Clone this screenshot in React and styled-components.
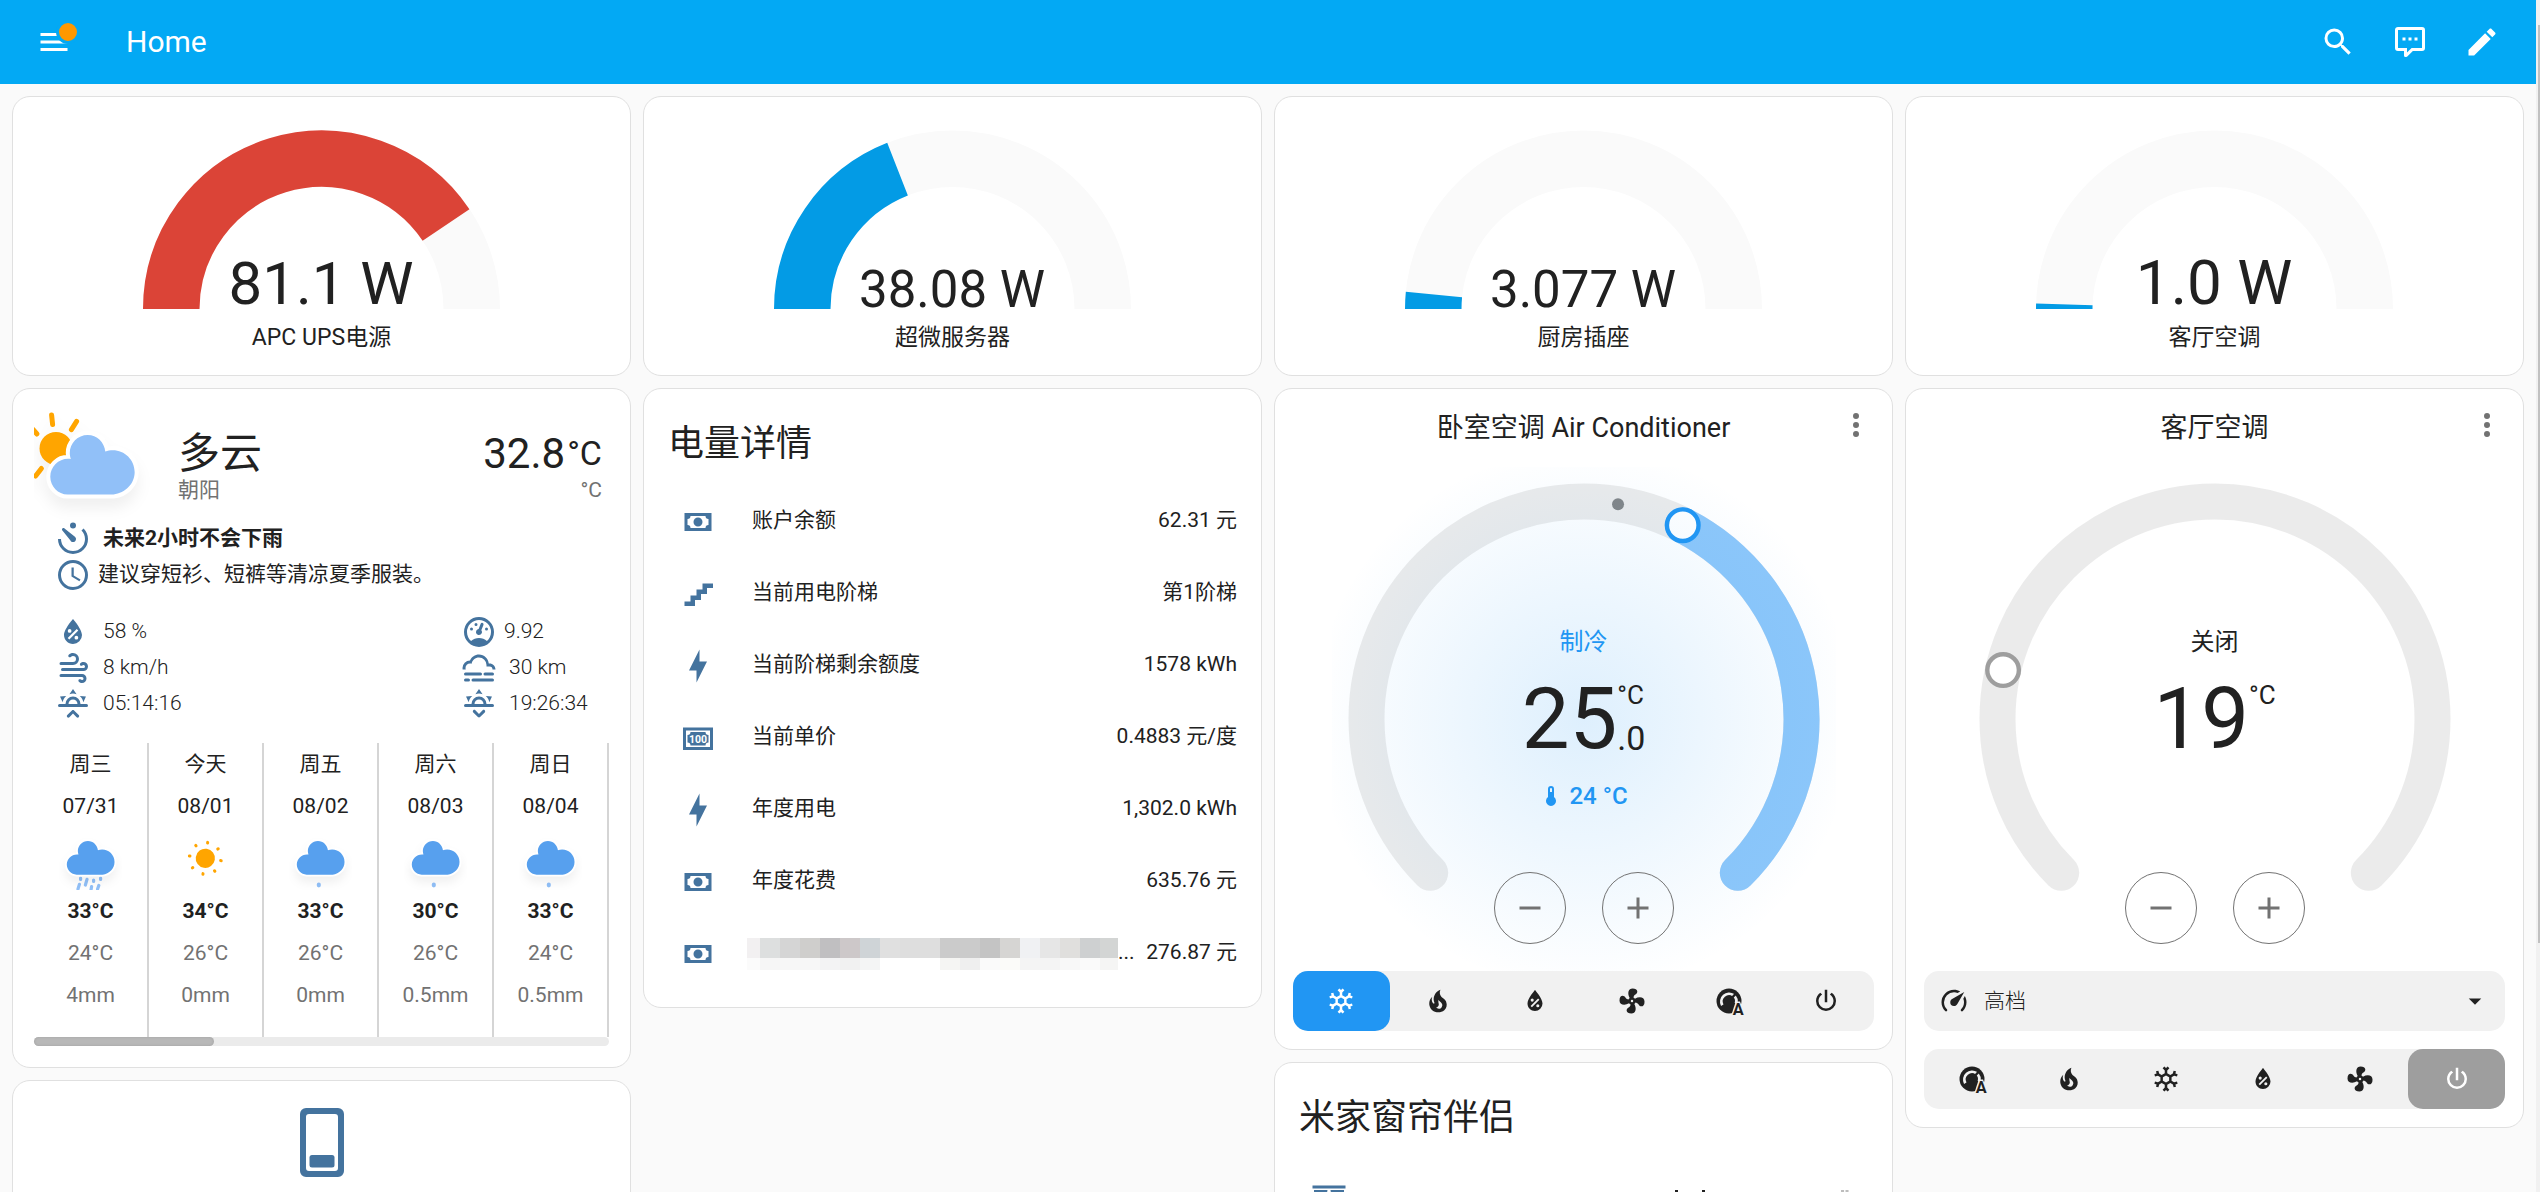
import React from 'react';
import styled, { createGlobalStyle } from 'styled-components';

const colors = {
    primary: '#03a9f4',
    text: '#212121',
    secondary: '#727272',
    icon: '#44739e',
    border: '#e0e0e0',
    page: '#fafafa',
    control: '#f1f1f1',
    cool: '#2196f3',
    off: '#9e9e9e',
    cloud: '#57a0ee',
    lightCloud: '#91c0f8',
    sun: '#ffa500',
};

const icons = {
    menu: 'M3,6H21V8H3V6M3,11H21V13H3V11M3,16H21V18H3V16Z',
    magnify: 'M9.5,3A6.5,6.5 0 0,1 16,9.5C16,11.11 15.41,12.59 14.44,13.73L14.71,14H15.5L20.5,19L19,20.5L14,15.5V14.71L13.73,14.44C12.59,15.41 11.11,16 9.5,16A6.5,6.5 0 0,1 3,9.5A6.5,6.5 0 0,1 9.5,3M9.5,5C7,5 5,7 5,9.5C5,12 7,14 9.5,14C12,14 14,12 14,9.5C14,7 12,5 9.5,5Z',
    comment: 'M9,22A1,1 0 0,1 8,21V18H4A2,2 0 0,1 2,16V4C2,2.89 2.9,2 4,2H20A2,2 0 0,1 22,4V16A2,2 0 0,1 20,18H13.9L10.2,21.71C10,21.9 9.75,22 9.5,22V22H9M10,16V19.08L13.08,16H20V4H4V16H10M17,11H15V9H17V11M13,11H11V9H13V11M9,11H7V9H9V11Z',
    pencil: 'M20.71,7.04C21.1,6.65 21.1,6 20.71,5.63L18.37,3.29C18,2.9 17.35,2.9 16.96,3.29L15.12,5.12L18.87,8.87M3,17.25V21H6.75L17.81,9.93L14.06,6.18L3,17.25Z',
    dots: 'M12,16A2,2 0 0,1 14,18A2,2 0 0,1 12,20A2,2 0 0,1 10,18A2,2 0 0,1 12,16M12,10A2,2 0 0,1 14,12A2,2 0 0,1 12,14A2,2 0 0,1 10,12A2,2 0 0,1 12,10M12,4A2,2 0 0,1 14,6A2,2 0 0,1 12,8A2,2 0 0,1 10,6A2,2 0 0,1 12,4Z',
    cash: 'M3,6H21V18H3V6M12,9A3,3 0 0,1 15,12A3,3 0 0,1 12,15A3,3 0 0,1 9,12A3,3 0 0,1 12,9M7,8A2,2 0 0,1 5,10V14A2,2 0 0,1 7,16H17A2,2 0 0,1 19,14V10A2,2 0 0,1 17,8H7Z',
    stairs: 'M15,5V9H11V13H7V17H3V20H10V16H14V12H18V8H22V5H15Z',
    bolt: 'M11 15H6L13 1V9H18L11 23V15Z',
    snowflake: 'M20.79,13.95L18.46,14.57L16.46,13.44V10.56L18.46,9.43L20.79,10.05L21.31,8.12L19.54,7.65L20,5.88L18.07,5.36L17.45,7.69L15.45,8.82L13,7.38V5.12L14.71,3.41L13.29,2L12,3.29L10.71,2L9.29,3.41L11,5.12V7.38L8.5,8.82L6.5,7.69L5.92,5.36L4,5.88L4.47,7.65L2.7,8.12L3.22,10.05L5.55,9.43L7.55,10.56V13.45L5.55,14.58L3.22,13.96L2.7,15.89L4.47,16.36L4,18.12L5.93,18.64L6.55,16.31L8.55,15.18L11,16.62V18.88L9.29,20.59L10.71,22L12,20.71L13.29,22L14.7,20.59L13,18.88V16.62L15.5,15.17L17.5,16.3L18.12,18.63L20,18.12L19.53,16.35L21.3,15.88L20.79,13.95M9.5,10.56L12,9.11L14.5,10.56V13.44L12,14.89L9.5,13.44V10.56Z',
    fire: 'M17.66 11.2C17.43 10.9 17.15 10.64 16.89 10.38C16.22 9.78 15.46 9.35 14.82 8.72C13.33 7.26 13 4.85 13.95 3C13 3.23 12.17 3.75 11.46 4.32C8.87 6.4 7.85 10.07 9.07 13.22C9.11 13.32 9.15 13.42 9.15 13.55C9.15 13.77 9 13.97 8.8 14.05C8.57 14.15 8.33 14.09 8.14 13.93C8.08 13.88 8.04 13.83 8 13.76C6.87 12.33 6.69 10.28 7.45 8.64C5.78 10 4.87 12.3 5 14.47C5.06 14.97 5.12 15.47 5.29 15.97C5.43 16.57 5.7 17.17 6 17.7C7.08 19.43 8.95 20.67 10.96 20.92C13.1 21.19 15.39 20.8 17.03 19.32C18.86 17.66 19.5 15 18.56 12.72L18.43 12.46C18.22 12 17.66 11.2 17.66 11.2M14.5 17.5C14.22 17.74 13.76 18 13.4 18.1C12.28 18.5 11.16 17.94 10.5 17.28C11.69 17 12.4 16.12 12.61 15.23C12.78 14.43 12.46 13.77 12.33 13C12.21 12.26 12.23 11.63 12.5 10.94C12.69 11.32 12.89 11.7 13.13 12C13.9 13 15.11 13.44 15.37 14.8C15.41 14.94 15.43 15.08 15.43 15.23C15.46 16.05 15.1 16.95 14.5 17.5H14.5Z',
    humidity: 'M12,3.25C12,3.25 6,10 6,14C6,17.32 8.69,20 12,20A6,6 0 0,0 18,14C18,10 12,3.25 12,3.25M14.47,9.97L15.53,11.03L9.53,17.03L8.47,15.97M9.75,10A1.25,1.25 0 0,1 11,11.25A1.25,1.25 0 0,1 9.75,12.5A1.25,1.25 0 0,1 8.5,11.25A1.25,1.25 0 0,1 9.75,10M14.25,14.5A1.25,1.25 0 0,1 15.5,15.75A1.25,1.25 0 0,1 14.25,17A1.25,1.25 0 0,1 13,15.75A1.25,1.25 0 0,1 14.25,14.5Z',
    fan: 'M12,11A1,1 0 0,0 11,12A1,1 0 0,0 12,13A1,1 0 0,0 13,12A1,1 0 0,0 12,11M12.5,2C17,2 17.11,5.57 14.75,6.75C13.76,7.24 13.32,8.29 13.13,9.22C13.61,9.42 14.03,9.73 14.35,10.13C18.05,8.13 22.03,8.92 22.03,12.5C22.03,17 18.46,17.1 17.28,14.73C16.78,13.74 15.72,13.3 14.79,13.11C14.59,13.59 14.28,14 13.88,14.34C15.87,18.03 15.08,22 11.5,22C7,22 6.91,18.42 9.27,17.24C10.25,16.75 10.69,15.71 10.89,14.79C10.4,14.59 9.97,14.27 9.65,13.87C5.96,15.85 2,15.07 2,11.5C2,7 5.56,6.89 6.74,9.26C7.24,10.25 8.29,10.68 9.22,10.87C9.41,10.39 9.73,9.97 10.14,9.65C8.15,5.96 8.94,2 12.5,2Z',
    power: 'M16.56,5.44L15.11,6.89C16.84,7.94 18,9.83 18,12A6,6 0 0,1 12,18A6,6 0 0,1 6,12C6,9.83 7.16,7.94 8.88,6.88L7.44,5.44C5.36,6.88 4,9.28 4,12A8,8 0 0,0 12,20A8,8 0 0,0 20,12C20,9.28 18.64,6.88 16.56,5.44M13,3H11V13H13',
    timer: 'M4.94,6.35C4.55,5.96 4.55,5.32 4.94,4.93C5.33,4.54 5.96,4.54 6.35,4.93L13.07,10.31L13.42,10.59C14.2,11.37 14.2,12.64 13.42,13.42C12.64,14.2 11.37,14.2 10.59,13.42L10.31,13.07L4.94,6.35M12,20A8,8 0 0,0 20,12C20,9.79 19.1,7.79 17.66,6.34L19.07,4.93C20.88,6.74 22,9.24 22,12A10,10 0 0,1 12,22A10,10 0 0,1 2,12H4A8,8 0 0,0 12,20M12,1A2,2 0 0,1 14,3A2,2 0 0,1 12,5A2,2 0 0,1 10,3A2,2 0 0,1 12,1Z',
    clock: 'M12,20A8,8 0 0,0 20,12A8,8 0 0,0 12,4A8,8 0 0,0 4,12A8,8 0 0,0 12,20M12,2A10,10 0 0,1 22,12A10,10 0 0,1 12,22C6.47,22 2,17.5 2,12A10,10 0 0,1 12,2M12.5,7V12.25L17,14.92L16.25,16.15L11,13V7H12.5Z',
    wind: 'M4,10A1,1 0 0,1 3,9A1,1 0 0,1 4,8H12A2,2 0 0,0 14,6A2,2 0 0,0 12,4C11.45,4 10.95,4.22 10.59,4.59C10.2,5 9.56,5 9.17,4.59C8.78,4.2 8.78,3.56 9.17,3.17C9.9,2.45 10.9,2 12,2A4,4 0 0,1 16,6A4,4 0 0,1 12,10H4M19,12A1,1 0 0,0 20,11A1,1 0 0,0 19,10C18.72,10 18.47,10.11 18.29,10.29C17.9,10.68 17.27,10.68 16.88,10.29C16.5,9.9 16.5,9.27 16.88,8.88C17.42,8.34 18.17,8 19,8A3,3 0 0,1 22,11A3,3 0 0,1 19,14H5A1,1 0 0,1 4,13A1,1 0 0,1 5,12H19M18,18H4A1,1 0 0,1 3,17A1,1 0 0,1 4,16H18A3,3 0 0,1 21,19A3,3 0 0,1 18,22C17.17,22 16.42,21.66 15.88,21.12C15.5,20.73 15.5,20.1 15.88,19.71C16.27,19.32 16.9,19.32 17.29,19.71C17.47,19.89 17.72,20 18,20A1,1 0 0,0 19,19A1,1 0 0,0 18,18Z',
    gauge: 'M12,2A10,10 0 0,0 2,12A10,10 0 0,0 12,22A10,10 0 0,0 22,12A10,10 0 0,0 12,2M12,4A8,8 0 0,1 20,12C20,14.4 19,16.5 17.3,18C15.9,16.7 14,16 12,16C10,16 8.2,16.7 6.7,18C5,16.5 4,14.4 4,12A8,8 0 0,1 12,4M14,5.89C13.62,5.9 13.26,6.15 13.1,6.54L11.81,9.77L11.71,10C11,10.13 10.41,10.6 10.14,11.26C9.73,12.29 10.23,13.45 11.26,13.86C12.29,14.27 13.45,13.77 13.86,12.74C14.12,12.08 14,11.32 13.57,10.76L13.67,10.5L14.96,7.29L14.97,7.26C15.17,6.75 14.92,6.17 14.41,5.96C14.28,5.91 14.15,5.89 14,5.89M10,6A1,1 0 0,0 9,7A1,1 0 0,0 10,8A1,1 0 0,0 11,7A1,1 0 0,0 10,6M7,9A1,1 0 0,0 6,10A1,1 0 0,0 7,11A1,1 0 0,0 8,10A1,1 0 0,0 7,9M17,9A1,1 0 0,0 16,10A1,1 0 0,0 17,11A1,1 0 0,0 18,10A1,1 0 0,0 17,9Z',
    fog: 'M3,15H13A1,1 0 0,1 14,16A1,1 0 0,1 13,17H3A1,1 0 0,1 2,16A1,1 0 0,1 3,15M16,15H21A1,1 0 0,1 22,16A1,1 0 0,1 21,17H16A1,1 0 0,1 15,16A1,1 0 0,1 16,15M1,12A5,5 0 0,1 6,7C7,4.65 9.3,3 12,3C15.43,3 18.24,5.66 18.5,9.03L19,9C21.19,9 22.97,10.76 23,13H21A2,2 0 0,0 19,11H17V10A5,5 0 0,0 12,5C9.5,5 7.45,6.82 7.06,9.19C6.73,9.07 6.37,9 6,9A3,3 0 0,0 3,12C3,12.35 3.06,12.69 3.17,13H1.1L1,12M3,19H5A1,1 0 0,1 6,20A1,1 0 0,1 5,21H3A1,1 0 0,1 2,20A1,1 0 0,1 3,19M8,19H21A1,1 0 0,1 22,20A1,1 0 0,1 21,21H8A1,1 0 0,1 7,20A1,1 0 0,1 8,19Z',
    sunrise: 'M3,12H7A5,5 0 0,1 12,7A5,5 0 0,1 17,12H21A1,1 0 0,1 22,13A1,1 0 0,1 21,14H3A1,1 0 0,1 2,13A1,1 0 0,1 3,12M15,12A3,3 0 0,0 12,9A3,3 0 0,0 9,12H15M12,2L14.39,5.42C13.65,5.15 12.84,5 12,5C11.16,5 10.35,5.15 9.61,5.42L12,2M3.34,7L7.5,6.65C6.9,7.16 6.36,7.78 5.94,8.5C5.5,9.24 5.25,10 5.11,10.79L3.34,7M20.65,7L18.88,10.79C18.74,10 18.47,9.23 18.05,8.5C17.63,7.78 17.1,7.15 16.5,6.64L20.65,7M12.71,16.3L15.82,19.41C16.21,19.8 16.21,20.43 15.82,20.82C15.43,21.21 14.8,21.21 14.41,20.82L12,18.41L9.59,20.82C9.2,21.21 8.57,21.21 8.18,20.82C7.79,20.43 7.79,19.8 8.18,19.41L11.29,16.3C11.5,16.1 11.74,16 12,16C12.26,16 12.5,16.1 12.71,16.3Z',
    sunset: 'M3,12H7A5,5 0 0,1 12,7A5,5 0 0,1 17,12H21A1,1 0 0,1 22,13A1,1 0 0,1 21,14H3A1,1 0 0,1 2,13A1,1 0 0,1 3,12M15,12A3,3 0 0,0 12,9A3,3 0 0,0 9,12H15M12,2L14.39,5.42C13.65,5.15 12.84,5 12,5C11.16,5 10.35,5.15 9.61,5.42L12,2M3.34,7L7.5,6.65C6.9,7.16 6.36,7.78 5.94,8.5C5.5,9.24 5.25,10 5.11,10.79L3.34,7M20.65,7L18.88,10.79C18.74,10 18.47,9.23 18.05,8.5C17.63,7.78 17.1,7.15 16.5,6.64L20.65,7M12.71,20.71L15.82,17.6C16.21,17.21 16.21,16.57 15.82,16.18C15.43,15.79 14.8,15.79 14.41,16.18L12,18.59L9.59,16.18C9.2,15.79 8.57,15.79 8.18,16.18C7.79,16.57 7.79,17.21 8.18,17.6L11.29,20.71C11.5,20.9 11.74,21 12,21C12.26,21 12.5,20.9 12.71,20.71Z',
    thermometer: 'M15 13V5A3 3 0 0 0 9 5V13A5 5 0 1 0 15 13M12 4A1 1 0 0 1 13 5V8H11V5A1 1 0 0 1 12 4Z',
    plus: 'M19,13H13V19H11V13H5V11H11V5H13V11H19V13Z',
    minus: 'M19,13H5V11H19V13Z',
    speedometer: 'M12,16A3,3 0 0,1 9,13C9,11.88 9.61,10.9 10.5,10.39L20.21,4.77L14.68,14.35C14.18,15.33 13.17,16 12,16M12,3C13.81,3 15.5,3.5 16.97,4.32L14.87,5.53C14,5.19 13,5 12,5A8,8 0 0,0 4,13C4,15.21 4.89,17.21 6.34,18.65H6.35C6.74,19.04 6.74,19.67 6.35,20.06C5.96,20.45 5.32,20.45 4.93,20.07V20.07C3.12,18.26 2,15.76 2,13A10,10 0 0,1 12,3M22,13C22,15.76 20.88,18.26 19.07,20.07V20.07C18.68,20.45 18.05,20.45 17.66,20.06C17.27,19.67 17.27,19.04 17.66,18.65V18.65C19.11,17.2 20,15.21 20,13C20,12 19.81,11 19.46,10.1L20.67,8C21.5,9.5 22,11.18 22,13Z',
    menuDown: 'M7,10L12,15L17,10H7Z',
    curtains: 'M23 3H1V1H23V3M2 22H6C6 19 4 17 4 17C10 13 11 4 11 4H2V22M22 4H13C13 4 14 13 20 17C20 17 18 19 18 22H22V4Z',
    expand: 'M9,11H15V8L19,12L15,16V13H9V16L5,12L9,8V11M2,20V4H4V20H2M20,20V4H22V20H20Z',
    collapse: 'M13,20V4H15.03V20H13M10,20V4H12.03V20H10M5,8L9.03,12L5,16V13H2V11H5V8M20,16L16,12L20,8V11H23V13H20V16Z',
    stop: 'M18,18H6V6H18V18Z',
};

const gauges = [
    { label: 'APC UPS电源', value: 81.1, text: '81.1 W', size: 60, color: '#db4437' },
    { label: '超微服务器', value: 38.08, text: '38.08 W', size: 51, color: '#039be5' },
    { label: '厨房插座', value: 3.077, text: '3.077 W', size: 51, color: '#039be5' },
    { label: '客厅空调', value: 1, text: '1.0 W', size: 62, color: '#039be5' },
];

const attributes = [
    { icon: 'humidity', text: '58 %' },
    { icon: 'gauge', text: '9.92', tight: true },
    { icon: 'wind', text: '8 km/h' },
    { icon: 'fog', text: '30 km' },
    { icon: 'sunrise', text: '05:14:16' },
    { icon: 'sunset', text: '19:26:34' },
];

const forecast = [
    { day: '周三', date: '07/31', sky: 'rain', high: '33°C', low: '24°C', rain: '4mm' },
    { day: '今天', date: '08/01', sky: 'sun', high: '34°C', low: '26°C', rain: '0mm' },
    { day: '周五', date: '08/02', sky: 'drizzle', high: '33°C', low: '26°C', rain: '0mm' },
    { day: '周六', date: '08/03', sky: 'drizzle', high: '30°C', low: '26°C', rain: '0.5mm' },
    { day: '周日', date: '08/04', sky: 'drizzle', high: '33°C', low: '24°C', rain: '0.5mm' },
];

const energy = [
    { icon: 'cash', name: '账户余额', value: '62.31 元' },
    { icon: 'stairs', name: '当前用电阶梯', value: '第1阶梯' },
    { icon: 'bolt', name: '当前阶梯剩余额度', value: '1578 kWh' },
    { icon: 'banknote', name: '当前单价', value: '0.4883 元/度' },
    { icon: 'bolt', name: '年度用电', value: '1,302.0 kWh' },
    { icon: 'cash', name: '年度花费', value: '635.76 元' },
    { icon: 'cash', hidden: true, value: '276.87 元' },
];

const mosaic = [
    ['#f2f0f1', '#fbfbfb'], ['#dddfdf', '#f6f6f6'], ['#d5d5d5', '#f7f7f7'], ['#cfcecc', '#f7f7f7'],
    ['#c0bfc1', '#f3f3f4'], ['#cdc8c9', '#f1f1f1'], ['#cfd4d7', '#f4f5f5'], ['#e0e0e0', '#fff'],
    ['#dedede', '#fff'], ['#dedede', '#fff'], ['#cbcbcb', '#f5f5f3'], ['#cbcbcb', '#efefef'],
    ['#c4c4c4', '#fafafa'], ['#d6d5d3', '#fbfbf9'], ['#f0f1f3', '#f4f4f4'], ['#e6e6e6', '#f4f4f4'],
    ['#e0dfdd', '#f8f8f8'], ['#ced0d1', '#fafafa'], ['#d3d5d4', '#f5f5f4'],
];

const GlobalStyle = createGlobalStyle`
    * {
        box-sizing: border-box;
    }
    body {
        margin: 0;
        background: ${colors.page};
        color: ${colors.text};
        font-family: Roboto, "Noto Sans CJK SC", sans-serif;
        font-size: 21px;
    }
    button, select {
        font: inherit;
        color: inherit;
        border: 0;
        padding: 0;
        background: none;
    }
    h1, h2, p, ul {
        margin: 0;
        padding: 0;
        font-weight: 400;
        list-style: none;
    }
    svg {
        display: block;
        flex: none;
    }
`;

const Shell = styled.div`
    display: flex;
    height: 100vh;
    overflow: hidden;
`;

const Page = styled.div`
    flex: 1;
    min-width: 0;
    display: flex;
    flex-direction: column;
`;

const ScrollTrack = styled.div`
    width: 4px;
    padding: 25px 0 0 2px;
    background: #f1f1f1;
`;

const ScrollThumb = styled.div`
    height: 918px;
    background: #c1c1c1;
`;

const Toolbar = styled.header`
    display: flex;
    align-items: center;
    flex: none;
    height: 84px;
    padding: 0 18px;
    background: ${colors.primary};
    color: #fff;
`;

const ToolbarTitle = styled.h1`
    flex: 1;
    margin-left: 36px;
    padding-bottom: 2px;
    font-size: 30px;
`;

const IconButton = styled.button`
    position: relative;
    display: flex;
    align-items: center;
    justify-content: center;
    flex: none;
    width: 72px;
    height: 72px;
    color: ${(props) => props.$color || 'inherit'};
`;

const Dot = styled.span`
    position: absolute;
    top: 14px;
    right: 10px;
    width: 24px;
    height: 24px;
    border: 3px solid ${colors.primary};
    border-radius: 50%;
    background: #ff9800;
`;

const Board = styled.main`
    flex: 1;
    min-height: 0;
    overflow: hidden;
    display: grid;
    grid-template-columns: repeat(4, minmax(0, 1fr));
    gap: 12px;
    padding: 12px;
`;

const Column = styled.div`
    display: flex;
    flex-direction: column;
    gap: 12px;
`;

const Card = styled.section`
    position: relative;
    flex: none;
    border: 1px solid ${colors.border};
    border-radius: 18px;
    background: #fff;
`;

const GaugeCard = styled(Card)`
    display: flex;
    flex-direction: column;
    align-items: center;
    gap: 12px;
    padding: 24px 24px 20px;
`;

const GaugeLabel = styled.p`
    font-size: 23px;
    line-height: 34px;
`;

const WeatherCard = styled(Card)`
    padding: 21px;
`;

const WeatherHead = styled.div`
    display: flex;
    padding-right: 7px;
`;

const WeatherText = styled.div`
    padding-top: 20px;
    text-align: ${(props) => props.$align || 'left'};
    margin-left: ${(props) => (props.$align ? 'auto' : '24px')};
`;

const WeatherMain = styled.p`
    display: flex;
    font-size: 42px;
    line-height: 48px;
`;

const WeatherUnit = styled.span`
    font-size: 34px;
    line-height: 46px;
    margin-left: 2px;
`;

const WeatherSub = styled.p`
    line-height: 25px;
    color: ${colors.secondary};
`;

const Notes = styled.div`
    padding-left: 21px;
    margin-bottom: 21px;
`;

const AttributeGrid = styled.div`
    display: grid;
    grid-template-columns: 1fr 148px;
    padding-left: 21px;
    margin-bottom: 21px;
`;

const Attribute = styled.div`
    display: flex;
    gap: ${(props) => (props.$tight ? '7px' : '12px')};
    line-height: 34px;
    font-weight: ${(props) => props.$weight || 300};

    svg {
        color: ${colors.icon};
    }
`;

const ForecastRow = styled.div`
    display: grid;
    grid-template-columns: repeat(5, 1fr);
`;

const ForecastDay = styled.div`
    display: flex;
    flex-direction: column;
    align-items: center;
    padding-bottom: 21px;
    border-right: 2px solid #d5d5d5;
    line-height: 42px;
`;

const High = styled.span`
    font-weight: 700;
`;

const Muted = styled.span`
    color: ${colors.secondary};
`;

const ForecastScroll = styled.div`
    height: 9px;
    border-radius: 5px;
    background: #ebebeb;
`;

const ForecastThumb = styled.div`
    width: 180px;
    height: 9px;
    border-radius: 5px;
    background: #b8b8b8;
    box-shadow: inset 0 0 3px rgba(0, 0, 0, 0.12);
`;

const PhoneCard = styled(Card)`
    display: flex;
    justify-content: center;
    padding: 27px 24px 90px;
`;

const ListCard = styled(Card)`
    padding: 0 24px 23px;
`;

const CardTitle = styled.h2`
    padding: 19px 0 12px;
    font-size: 36px;
    line-height: 72px;
`;

const Rows = styled.ul`
    display: flex;
    flex-direction: column;
    gap: 12px;
`;

const Row = styled.li`
    display: flex;
    height: 60px;
    line-height: 57px;
`;

const RowIcon = styled.span`
    display: flex;
    align-items: center;
    justify-content: center;
    width: 60px;
    margin-right: 24px;
    color: ${colors.icon};
`;

const RowName = styled.span`
    flex: 1;
    display: flex;
    min-width: 0;
`;

const MosaicSvg = styled.svg`
    align-self: center;
    margin-left: -5px;
`;

const CoverRow = styled.div`
    display: flex;
    align-items: center;
    gap: 5px;
    margin-right: -12px;
`;

const CoverIcon = styled(RowIcon)`
    margin-right: auto;
`;

const ClimateCard = styled(Card)`
    display: flex;
    flex-direction: column;
    align-items: center;
    padding: 21px 18px 18px;
`;

const ClimateTitle = styled.h2`
    margin-bottom: 33px;
    font-size: 27px;
    line-height: 36px;
`;

const MoreButton = styled(IconButton)`
    position: absolute;
    top: 0;
    right: 0;
    color: ${colors.secondary};
`;

const Dial = styled.div`
    position: relative;
    margin-bottom: 12px;
`;

const Glow = styled.div`
    position: absolute;
    inset: -12px;
    opacity: 0.15;
    background: radial-gradient(54% 54%, ${(props) => props.$color} 0%, transparent 100%);
`;

const DialInfo = styled.div`
    position: absolute;
    inset: 0;
    display: flex;
    flex-direction: column;
    align-items: center;
    justify-content: center;
    gap: 17px;
`;

const DialLine = styled.div`
    display: flex;
    align-items: center;
    gap: 6px;
    height: 36px;
    font-size: 24px;
    line-height: 36px;
    font-weight: ${(props) => props.$weight || 400};
    color: ${(props) => props.$color || 'inherit'};
`;

const BigNumber = styled.div`
    display: flex;
    height: 84px;
    font-size: 85px;
    line-height: 84px;
`;

const BigSide = styled.span`
    display: flex;
    flex-direction: column;
    justify-content: space-between;
    padding: 2px 0 5px;
    font-size: 26px;
    line-height: 32px;
`;

const Decimal = styled.span`
    font-size: 34px;
    line-height: 36px;
`;

const DialButtons = styled.div`
    position: absolute;
    inset: auto 0 15px;
    display: flex;
    justify-content: center;
    gap: 36px;
`;

const RoundButton = styled(IconButton)`
    border: 1px solid ${colors.secondary};
    border-radius: 50%;
    color: ${colors.secondary};
`;

const Controls = styled.div`
    position: relative;
    align-self: stretch;
    display: flex;
    flex-direction: column;
    gap: 18px;
`;

const ControlBar = styled.div`
    display: flex;
    height: 60px;
    border-radius: 15px;
    background: ${colors.control};
`;

const ModeButton = styled.button`
    flex: 1;
    display: flex;
    align-items: center;
    justify-content: center;
    border-radius: 15px;
    background: ${(props) => props.$active || 'transparent'};
    color: ${(props) => (props.$active ? '#fff' : 'inherit')};
`;

const SelectBar = styled(ControlBar)`
    align-items: center;
    gap: 15px;
    padding: 0 15px;
`;

const FanSelect = styled.select`
    flex: 1;
    height: 60px;
    appearance: none;
    font-weight: 300;
    outline: none;
`;

const Icon = ({ name, size = 36 }) => {
    if (name === 'auto') {
        return (
            <svg width={size} height={size} viewBox="0 0 24 24" overflow="visible" aria-hidden="true">
                <mask id="auto-cut">
                    <rect width="24" height="24" fill="#fff" />
                    <path d="M6.6 15.4A6.2 6.2 0 0 1 15.6 7.4A6.2 6.2 0 0 1 17.6 14" fill="none" stroke="#000" strokeWidth="2.2" />
                    <path d="M12 12L17.4 6.2" stroke="#fff" strokeWidth="2" />
                    <path d="M13 26L17.4 12.4H20.8L26 26Z" fill="#000" />
                </mask>
                <circle cx="12" cy="12" r="10" fill="currentColor" mask="url(#auto-cut)" />
                <text x="19.4" y="23.2" textAnchor="middle" fontSize="13" fontWeight="700" fill="currentColor">A</text>
            </svg>
        );
    }
    if (name === 'banknote') {
        return (
            <svg width={size} height={size} viewBox="0 0 24 24" aria-hidden="true">
                <path fill="currentColor" d="M2,5H22V20H2V5M20,18V7H4V18H20M17,8A2,2 0 0,0 19,10V15A2,2 0 0,0 17,17H7A2,2 0 0,0 5,15V10A2,2 0 0,0 7,8H17Z" />
                <text x="12" y="15" textAnchor="middle" fontSize="7" fontWeight="700" fill="#fff">100</text>
            </svg>
        );
    }
    return (
        <svg width={size} height={size} viewBox="0 0 24 24" aria-hidden="true">
            <path d={icons[name]} fill="currentColor" />
        </svg>
    );
};

const Gauge = (props) => {
    const { label, value, text, size, color } = props;
    const angle = (value / 100) * Math.PI;
    const x = 187.5 - 150.25 * Math.cos(angle);
    const y = 188 - 150.25 * Math.sin(angle);
    return (
        <GaugeCard>
            <svg width="375" height="188" viewBox="0 0 375 188" overflow="visible">
                <g fill="none" strokeWidth="56.5">
                    <path d="M37.25 188A150.25 150.25 0 0 1 337.75 188" stroke={colors.page} />
                    <path d={`M37.25 188A150.25 150.25 0 0 1 ${x} ${y}`} stroke={color} />
                </g>
                <text x="187" y={size < 60 ? 186 : 183} textAnchor="middle" fontSize={size} fill={colors.text}>{text}</text>
            </svg>
            <GaugeLabel>{label}</GaugeLabel>
        </GaugeCard>
    );
};

const cloudPath = 'M47.7,35.4c0-4.6-3.7-8.2-8.2-8.2c-1,0-1.9,0.2-2.8,0.5c-0.3-3.4-3.1-6.2-6.6-6.2c-3.7,0-6.7,3-6.7,6.7c0,0.8,0.2,1.6,0.4,2.3c-0.3-0.1-0.7-0.1-1-0.1c-3.7,0-6.7,3-6.7,6.7c0,3.6,2.9,6.6,6.5,6.7l17.2,0C44.2,43.3,47.7,39.8,47.7,35.4z';

const CloudyDay = () => (
    <svg width="120" height="111" viewBox="34 410 120 111" role="img" aria-label="多云">
        <g filter="drop-shadow(0 10px 7px rgba(0, 0, 0, 0.06))">
            <circle cx="56" cy="448.4" r="16.5" fill={colors.sun} />
            <path
                d="M51.6 415L52.6 424.6M76.6 421.4L71.4 429.6M33 429.5L37 434M41.4 468.4L35.6 476"
                stroke={colors.sun}
                strokeWidth="5"
                strokeLinecap="round"
            />
            <path
                d={cloudPath}
                transform="translate(7.3 377.6) scale(2.67)"
                fill={colors.lightCloud}
                stroke="#fff"
                strokeWidth="3"
                paintOrder="stroke"
            />
        </g>
    </svg>
);

const SkyIcon = ({ sky }) => {
    if (sky === 'sun') {
        return (
            <svg width="63" height="63" viewBox="0 0 63 63">
                <g fill={colors.sun} transform="translate(31.3 31.3) rotate(8.5)">
                    <circle r="9.6" />
                    {[0, 45, 90, 135, 180, 225, 270, 315].map((turn) => (
                        <rect key={turn} x="-1.5" y="-17.6" width="3" height="3.6" rx="1.5" transform={`rotate(${turn})`} />
                    ))}
                </g>
            </svg>
        );
    }
    return (
        <svg width="63" height="63" viewBox="0 0 63 63">
            {sky === 'rain' ? (
                <path
                    d="M21.6 51V52.4M20.4 57.4L19 62M28 52.4L26.4 58M34.6 53V54.4M32.6 59.6L32 63M41.6 51V52.4M39.8 58.4L38.6 62"
                    stroke={colors.lightCloud}
                    strokeWidth="3.2"
                    strokeLinecap="round"
                />
            ) : (
                <ellipse cx="29.8" cy="58" rx="2.1" ry="2.4" fill={colors.lightCloud} />
            )}
            <path
                d={cloudPath}
                transform="translate(-16.5 -18.5) scale(1.51)"
                fill={colors.cloud}
                stroke="#fff"
                strokeWidth="2.4"
                paintOrder="stroke"
                filter="drop-shadow(0 4px 3px rgba(0, 0, 0, 0.06))"
            />
        </svg>
    );
};

const Weather = () => (
    <WeatherCard>
        <WeatherHead>
            <CloudyDay />
            <WeatherText>
                <WeatherMain>多云</WeatherMain>
                <WeatherSub>朝阳</WeatherSub>
            </WeatherText>
            <WeatherText $align="right">
                <WeatherMain>32.8<WeatherUnit>°C</WeatherUnit></WeatherMain>
                <WeatherSub>°C</WeatherSub>
            </WeatherText>
        </WeatherHead>
        <Notes>
            <Attribute $weight={700}><Icon name="timer" />未来2小时不会下雨</Attribute>
            <Attribute $weight={400} $tight><Icon name="clock" />建议穿短衫、短裤等清凉夏季服装。</Attribute>
        </Notes>
        <AttributeGrid>
            {attributes.map((item) => (
                <Attribute key={item.icon} $tight={item.tight}>
                    <Icon name={item.icon} />
                    {item.text}
                </Attribute>
            ))}
        </AttributeGrid>
        <ForecastRow>
            {forecast.map((item) => (
                <ForecastDay key={item.date}>
                    <span>{item.day}</span>
                    <span>{item.date}</span>
                    <SkyIcon sky={item.sky} />
                    <High>{item.high}</High>
                    <Muted>{item.low}</Muted>
                    <Muted>{item.rain}</Muted>
                </ForecastDay>
            ))}
        </ForecastRow>
        <ForecastScroll>
            <ForecastThumb />
        </ForecastScroll>
    </WeatherCard>
);

const Phone = () => (
    <PhoneCard>
        <svg width="44" height="70" viewBox="0 0 44 70">
            <path
                fill={colors.icon}
                fillRule="evenodd"
                d="M6 0H38A6 6 0 0 1 44 6V63A6 6 0 0 1 38 69H6A6 6 0 0 1 0 63V6A6 6 0 0 1 6 0ZM9 6A3 3 0 0 0 6 9V60A3 3 0 0 0 9 63H35A3 3 0 0 0 38 60V9A3 3 0 0 0 35 6Z"
            />
            <rect x="9.5" y="47" width="25" height="12.5" rx="2.5" fill={colors.icon} />
        </svg>
    </PhoneCard>
);

const Mosaic = () => (
    <MosaicSvg width="371" height="32" viewBox="0 0 371 32" aria-hidden="true">
        {mosaic.map(([top, bottom], index) => {
            const x = index === 0 ? 0 : index * 20 - 7;
            return (
                <g key={index} shapeRendering="crispEdges">
                    <rect x={x} y="0" width="20" height="20" fill={top} />
                    <rect x={x} y="20" width="20" height="12" fill={bottom} />
                </g>
            );
        })}
    </MosaicSvg>
);

const Energy = () => (
    <ListCard>
        <CardTitle>电量详情</CardTitle>
        <Rows>
            {energy.map((item) => (
                <Row key={item.value}>
                    <RowIcon><Icon name={item.icon} /></RowIcon>
                    <RowName>{item.hidden ? <><Mosaic />...</> : item.name}</RowName>
                    <span>{item.value}</span>
                </Row>
            ))}
        </Rows>
    </ListCard>
);

// degrees run clockwise from the top of the dial
const point = (degrees) => {
    const radians = (degrees * Math.PI) / 180;
    return { x: 240 + 217.5 * Math.sin(radians), y: 240 - 217.5 * Math.cos(radians) };
};

const arc = (from, to) => {
    const start = point(from);
    const end = point(to);
    return `M${start.x} ${start.y}A217.5 217.5 0 ${to - from > 180 ? 1 : 0} 1 ${end.x} ${end.y}`;
};

const Climate = (props) => {
    const { title, state, target, decimal, current, angle, currentAngle, color, modes, active, fanMode } = props;
    const handle = point(angle);
    const marker = current && point(currentAngle);
    return (
        <ClimateCard>
            <ClimateTitle>{title}</ClimateTitle>
            <MoreButton aria-label="更多信息"><Icon name="dots" /></MoreButton>
            <Dial>
                {current && <Glow $color={color} />}
                <svg width="480" height="480" viewBox="0 0 480 480">
                    <g fill="none" strokeWidth="36" strokeLinecap="round">
                        <path d={arc(-135, 135)} stroke="#bdbdbd" opacity="0.3" />
                        {current && <path d={arc(angle, 135)} stroke="#8dc7fa" />}
                    </g>
                    {marker && <circle cx={marker.x} cy={marker.y} r="6" fill="#828587" />}
                    <circle cx={handle.x} cy={handle.y} r="15.8" fill="#fff" stroke={color} strokeWidth="4.4" />
                </svg>
                <DialInfo>
                    <DialLine $color={current && color}>{state}</DialLine>
                    <BigNumber>
                        {target}
                        <BigSide>
                            °C
                            {decimal && <Decimal>{decimal}</Decimal>}
                        </BigSide>
                    </BigNumber>
                    <DialLine $color={color} $weight={500}>
                        {current && <><Icon name="thermometer" size={24} />{current}</>}
                    </DialLine>
                </DialInfo>
                <DialButtons>
                    <RoundButton aria-label="降低温度"><Icon name="minus" /></RoundButton>
                    <RoundButton aria-label="升高温度"><Icon name="plus" /></RoundButton>
                </DialButtons>
            </Dial>
            <Controls>
                {fanMode && (
                    <SelectBar>
                        <Icon name="speedometer" size={30} />
                        <FanSelect aria-label="风速" defaultValue={fanMode}>
                            <option>{fanMode}</option>
                        </FanSelect>
                        <Icon name="menuDown" size={30} />
                    </SelectBar>
                )}
                <ControlBar>
                    {modes.map((mode) => (
                        <ModeButton key={mode} aria-label={mode} $active={mode === active && color}>
                            <Icon name={mode} size={30} />
                        </ModeButton>
                    ))}
                </ControlBar>
            </Controls>
        </ClimateCard>
    );
};

const Curtains = () => (
    <ListCard>
        <CardTitle>米家窗帘伴侣</CardTitle>
        <CoverRow>
            <CoverIcon><Icon name="curtains" /></CoverIcon>
            <IconButton aria-label="打开"><Icon name="expand" /></IconButton>
            <IconButton aria-label="停止"><Icon name="stop" /></IconButton>
            <IconButton aria-label="关闭" $color="#bdbdbd" disabled><Icon name="collapse" /></IconButton>
        </CoverRow>
    </ListCard>
);

const App = () => (
    <Shell>
        <GlobalStyle />
        <Page>
            <Toolbar>
                <IconButton aria-label="菜单">
                    <Icon name="menu" />
                    <Dot />
                </IconButton>
                <ToolbarTitle>Home</ToolbarTitle>
                <IconButton aria-label="搜索"><Icon name="magnify" /></IconButton>
                <IconButton aria-label="对话"><Icon name="comment" /></IconButton>
                <IconButton aria-label="编辑"><Icon name="pencil" /></IconButton>
            </Toolbar>
            <Board>
                <Column>
                    <Gauge {...gauges[0]} />
                    <Weather />
                    <Phone />
                </Column>
                <Column>
                    <Gauge {...gauges[1]} />
                    <Energy />
                </Column>
                <Column>
                    <Gauge {...gauges[2]} />
                    <Climate
                        title="卧室空调 Air Conditioner"
                        state="制冷"
                        target="25"
                        decimal=".0"
                        current="24 °C"
                        angle={27}
                        currentAngle={9}
                        color={colors.cool}
                        modes={['snowflake', 'fire', 'humidity', 'fan', 'auto', 'power']}
                        active="snowflake"
                    />
                    <Curtains />
                </Column>
                <Column>
                    <Gauge {...gauges[3]} />
                    <Climate
                        title="客厅空调"
                        state="关闭"
                        target="19"
                        angle={-77}
                        color={colors.off}
                        modes={['auto', 'fire', 'snowflake', 'humidity', 'fan', 'power']}
                        active="power"
                        fanMode="高档"
                    />
                </Column>
            </Board>
        </Page>
        <ScrollTrack>
            <ScrollThumb />
        </ScrollTrack>
    </Shell>
);

export default App;
